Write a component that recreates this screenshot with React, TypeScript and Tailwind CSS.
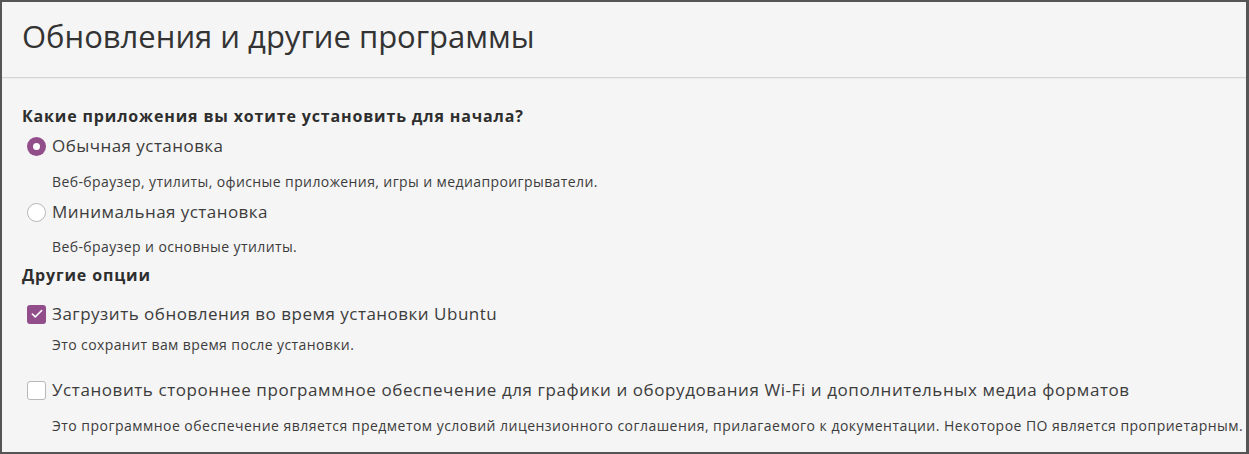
import { Check } from "lucide-react";

const font = { fontFamily: '"Open Sans", "Noto Sans", sans-serif' };

const Radio = ({ checked }: { checked?: boolean }) =>
  checked ? (
    <span className="w-[19px] h-[19px] rounded-full bg-[#924d8b] flex items-center justify-center shrink-0">
      <span className="w-[7px] h-[7px] rounded-full bg-white" />
    </span>
  ) : (
    <span className="w-[19px] h-[19px] rounded-full border border-[#b8b8b8] bg-white shrink-0" />
  );

const Checkbox = ({ checked }: { checked?: boolean }) =>
  checked ? (
    <span className="w-[19px] h-[19px] rounded-[3px] bg-[#924d8b] flex items-center justify-center shrink-0">
      <Check className="w-[14px] h-[14px] text-white" strokeWidth={2.75} />
    </span>
  ) : (
    <span className="w-[19px] h-[19px] rounded-[3px] border border-[#b8b8b8] bg-white shrink-0" />
  );

const App = () => {
  return (
    <div className="w-[1249px] h-[454px] bg-[#555555] p-[2px] pr-[3px]" style={font}>
      <div className="w-full h-full bg-[#f5f5f5] flex flex-col text-[#3c3c3c] overflow-hidden">
        {/* Header */}
        <div className="h-[76px] flex items-center pl-[20px] border-b border-[#d6d6d6]">
          <h1 className="text-[31px] leading-none text-[#333333] -mt-[6px]">
            Обновления и другие программы
          </h1>
        </div>
        <div className="h-px bg-[#ececec]" />

        <div className="pl-[20px] flex flex-col">
          <div className="h-[20px] mt-[27px] flex items-center text-[16px] tracking-[0.85px] font-bold text-[#2e2e2e]">
            Какие приложения вы хотите установить для начала?
          </div>

          <div className="h-[24px] mt-[8px] flex items-center gap-[6px] pl-[5px] text-[17px] tracking-[0.45px]">
            <Radio checked />
            <span>Обычная установка</span>
          </div>
          <div className="h-[18px] mt-[14px] flex items-center pl-[30px] text-[14px] tracking-[0.4px]">
            Веб-браузер, утилиты, офисные приложения, игры и медиапроигрыватели.
          </div>

          <div className="h-[24px] mt-[10px] flex items-center gap-[6px] pl-[5px] text-[17px] tracking-[0.45px]">
            <Radio />
            <span>Минимальная установка</span>
          </div>
          <div className="h-[18px] mt-[13px] flex items-center pl-[30px] text-[14px] tracking-[0.4px]">
            Веб-браузер и основные утилиты.
          </div>

          <div className="h-[20px] mt-[10px] flex items-center text-[16px] tracking-[0.85px] font-bold text-[#2e2e2e]">
            Другие опции
          </div>

          <div className="h-[24px] mt-[17px] flex items-center gap-[6px] pl-[5px] text-[17px] tracking-[0.5px]">
            <Checkbox checked />
            <span>Загрузить обновления во время установки Ubuntu</span>
          </div>
          <div className="h-[18px] mt-[9px] flex items-center pl-[30px] text-[14px] tracking-[0.4px]">
            Это сохранит вам время после установки.
          </div>

          <div className="h-[24px] mt-[25px] flex items-center gap-[6px] pl-[5px] text-[17px] tracking-[0.58px] whitespace-nowrap">
            <Checkbox />
            <span>
              Установить стороннее программное обеспечение для графики и оборудования Wi-Fi и
              дополнительных медиа форматов
            </span>
          </div>
          <div className="h-[18px] mt-[14px] flex items-center pl-[30px] text-[14px] tracking-[0.47px] whitespace-nowrap">
            Это программное обеспечение является предметом условий лицензионного соглашения,
            прилагаемого к документации. Некоторое ПО является проприетарным.
          </div>
        </div>
      </div>
    </div>
  );
};

export default App;
